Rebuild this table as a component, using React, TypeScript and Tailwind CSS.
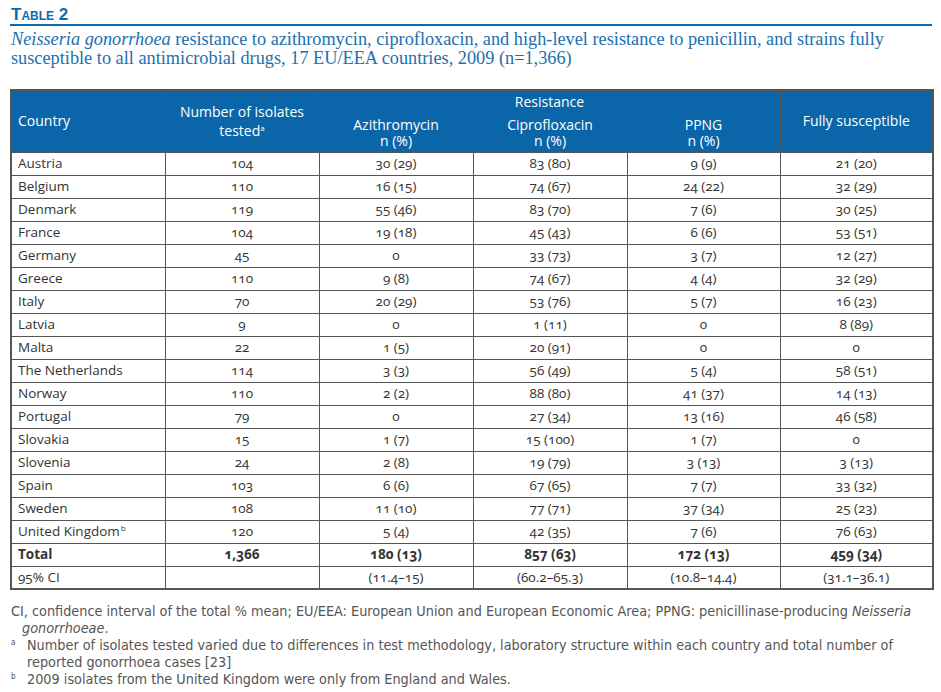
const rows: [string, string, string, string, string, string][] = [
  ['Austria', '104', '30 (29)', '83 (80)', '9 (9)', '21 (20)'],
  ['Belgium', '110', '16 (15)', '74 (67)', '24 (22)', '32 (29)'],
  ['Denmark', '119', '55 (46)', '83 (70)', '7 (6)', '30 (25)'],
  ['France', '104', '19 (18)', '45 (43)', '6 (6)', '53 (51)'],
  ['Germany', '45', '0', '33 (73)', '3 (7)', '12 (27)'],
  ['Greece', '110', '9 (8)', '74 (67)', '4 (4)', '32 (29)'],
  ['Italy', '70', '20 (29)', '53 (76)', '5 (7)', '16 (23)'],
  ['Latvia', '9', '0', '1 (11)', '0', '8 (89)'],
  ['Malta', '22', '1 (5)', '20 (91)', '0', '0'],
  ['The Netherlands', '114', '3 (3)', '56 (49)', '5 (4)', '58 (51)'],
  ['Norway', '110', '2 (2)', '88 (80)', '41 (37)', '14 (13)'],
  ['Portugal', '79', '0', '27 (34)', '13 (16)', '46 (58)'],
  ['Slovakia', '15', '1 (7)', '15 (100)', '1 (7)', '0'],
  ['Slovenia', '24', '2 (8)', '19 (79)', '3 (13)', '3 (13)'],
  ['Spain', '103', '6 (6)', '67 (65)', '7 (7)', '33 (32)'],
  ['Sweden', '108', '11 (10)', '77 (71)', '37 (34)', '25 (23)'],
]

const th = 'border border-[#555] font-normal text-white text-[14px] leading-[16px]'
const td = 'border border-[#555] h-[23px] p-0 text-center'

export default function App() {
  return (
    <div className="w-[941px] h-[692px] bg-white pt-[6px] pl-[10px] pr-[9px] font-['Open_Sans',sans-serif]">
      <div className="border-b-2 border-[#0a6aad] pl-[1px]">
        <div className="font-['Liberation_Sans',sans-serif] font-bold text-[17px] leading-[18px] text-[#0a6aad] [font-variant:small-caps]">
          Table 2
        </div>
      </div>
      <p className="mt-[4px] pl-[1px] font-['Liberation_Serif',serif] text-[18.3px] leading-[19px] text-[#1b70b0] whitespace-nowrap">
        <i>Neisseria gonorrhoea</i> resistance to azithromycin, ciprofloxacin, and high-level resistance to penicillin, and strains fully
        <br />
        susceptible to all antimicrobial drugs, 17 EU/EEA countries, 2009 (n=1,366)
      </p>
      <table className="mt-[21px] w-[922px] table-fixed border-collapse border-2 border-[#555] text-[13.5px] text-[#333] oldstyle-nums">
        <colgroup>
          <col className="w-[154px]" />
          <col className="w-[154px]" />
          <col className="w-[154px]" />
          <col className="w-[154px]" />
          <col className="w-[153px]" />
          <col className="w-[153px]" />
        </colgroup>
        <thead className="bg-[#0a66a8]">
          <tr className="h-[23px]">
            <th rowSpan={2} className={`${th} text-left pl-[6px]`}>Country</th>
            <th rowSpan={2} className={th}>
              Number of isolates
              <br />
              tested<span className="text-[8px] align-[5px]">a</span>
            </th>
            <th colSpan={3} className={th}>Resistance</th>
            <th rowSpan={2} className={th}>Fully susceptible</th>
          </tr>
          <tr className="h-[39px]">
            <th className={th}>Azithromycin<br />n (%)</th>
            <th className={th}>Ciprofloxacin<br />n (%)</th>
            <th className={th}>PPNG<br />n (%)</th>
          </tr>
        </thead>
        <tbody>
          {rows.map((r) => (
            <tr key={r[0]}>
              <td className={`${td} text-left pl-[6px]`}>{r[0]}</td>
              {r.slice(1).map((c, i) => (
                <td key={i} className={td}>{c}</td>
              ))}
            </tr>
          ))}
          <tr>
            <td className={`${td} text-left pl-[6px]`}>
              United Kingdom<span className="text-[8px] align-[5px] ml-[1px]">b</span>
            </td>
            <td className={td}>120</td>
            <td className={td}>5 (4)</td>
            <td className={td}>42 (35)</td>
            <td className={td}>7 (6)</td>
            <td className={td}>76 (63)</td>
          </tr>
          <tr className="font-bold">
            <td className={`${td} text-left pl-[6px]`}>Total</td>
            <td className={td}>1,366</td>
            <td className={td}>180 (13)</td>
            <td className={td}>857 (63)</td>
            <td className={td}>172 (13)</td>
            <td className={td}>459 (34)</td>
          </tr>
          <tr>
            <td className={`${td} text-left pl-[6px]`}>95% CI</td>
            <td className={td}></td>
            <td className={td}>(11.4–15)</td>
            <td className={td}>(60.2–65.3)</td>
            <td className={td}>(10.8–14.4)</td>
            <td className={td}>(31.1–36.1)</td>
          </tr>
        </tbody>
      </table>
      <div className="mt-[13px] pl-[1px] font-['DejaVu_Sans_Condensed','Liberation_Sans',sans-serif] [font-stretch:condensed] text-[14.3px] leading-[17px] text-[#555] oldstyle-nums whitespace-nowrap">
        <p>
          CI, confidence interval of the total % mean; EU/EEA: European Union and European Economic Area; PPNG: penicillinase-producing <i>Neisseria</i>
          <br />
          <span className="pl-[11px]"><i>gonorrhoeae</i>.</span>
        </p>
        <div className="flex">
          <span className="w-[16px] shrink-0 text-[8px] leading-[12px]">a</span>
          <p>
            Number of isolates tested varied due to differences in test methodology, laboratory structure within each country and total number of
            <br />
            reported gonorrhoea cases [23]
          </p>
        </div>
        <div className="flex">
          <span className="w-[16px] shrink-0 text-[8px] leading-[12px]">b</span>
          <p>2009 isolates from the United Kingdom were only from England and Wales.</p>
        </div>
      </div>
    </div>
  )
}
